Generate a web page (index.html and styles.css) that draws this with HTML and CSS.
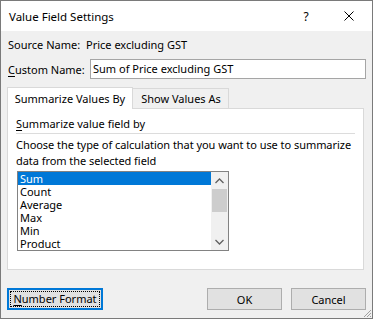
FILE: index.html
```html
<!DOCTYPE html>
<html>
<head>
<meta charset="utf-8">
<link rel="stylesheet" href="styles.css">
</head>
<body>
<div class="window">
  <div class="titlebar">
    <span class="title">Value Field Settings</span>
    <span class="help">?</span>
    <span class="close"><svg width="10" height="10" viewBox="0 0 10 10"><path d="M0.5 0.5 L9.5 9.5 M9.5 0.5 L0.5 9.5" stroke="#000" stroke-width="1" fill="none"/></svg></span>
  </div>
  <div class="body">
    <div class="row source">
      <span class="label">Source Name:</span>
      <span class="value">Price excluding GST</span>
    </div>
    <div class="row custom">
      <span class="label"><u>C</u>ustom Name:</span>
      <div class="input">Sum of Price excluding GST</div>
    </div>
    <div class="tabs">
      <div class="tab active">Summarize Values By</div>
      <div class="tab">Show Values As</div>
    </div>
    <div class="panel">
      <div class="heading"><u>S</u>ummarize value field by</div>
      <p class="desc"><span class="line">Choose the type of calculation that you want to use to summarize</span> data from the selected field</p>
      <div class="listbox">
        <ul class="items">
          <li class="selected">Sum</li>
          <li>Count</li>
          <li>Average</li>
          <li>Max</li>
          <li>Min</li>
          <li>Product</li>
        </ul>
        <div class="scrollbar">
          <div class="arrow"><svg width="9" height="6" viewBox="0 0 9 6"><path d="M0.5 5 L4.5 1 L8.5 5" stroke="#606060" stroke-width="1.3" fill="none"/></svg></div>
          <div class="thumb"></div>
          <div class="track"></div>
          <div class="arrow"><svg width="9" height="6" viewBox="0 0 9 6"><path d="M0.5 1 L4.5 5 L8.5 1" stroke="#606060" stroke-width="1.3" fill="none"/></svg></div>
        </div>
      </div>
    </div>
    <div class="buttons">
      <button class="btn default"><span class="focus"><u>N</u>umber Format</span></button>
      <div class="spacer"></div>
      <button class="btn ok">OK</button>
      <button class="btn cancel">Cancel</button>
    </div>
  </div>
  <svg class="grip" width="10" height="10" viewBox="0 0 10 10">
    <path d="M9 2 L2 9 M9 5 L5 9 M9 8 L8 9" stroke="#a0a0a0" stroke-width="1" fill="none"/>
  </svg>
</div>
</body>
</html>
```
FILE: styles.css
```css
* { box-sizing: border-box; margin: 0; padding: 0; }
body { margin: 0; font-family: "Noto Sans", "Open Sans", sans-serif; font-size: 11px; color: #000; background: #fff; }

.window {
  width: 373px; height: 319px;
  border: 1px solid #7a7a7a;
  background: #f0f0f0;
  position: relative;
  display: flex; flex-direction: column;
}

.titlebar {
  height: 30px; background: #fff;
  display: flex; align-items: center;
  flex-shrink: 0;
}
.title { flex: 1; padding-left: 8px; font-size: 11.5px; }
.help { width: 14px; text-align: center; font-size: 12px; margin-right: 31px; }
.close { width: 10px; height: 10px; margin-right: 18px; display: flex; }

.body { flex: 1; padding: 5px 6px 0 6px; display: flex; flex-direction: column; }

.row { display: flex; align-items: center; }
.row .label { padding-left: 1px; }
.source { height: 16px; }
.source .label { width: 79px; }
.custom { margin-top: 7px; height: 20px; }
.custom .label { width: 83px; }
.custom u, .heading u, .btn u { text-decoration: underline; text-underline-offset: 2px; }
.input {
  flex: 1; height: 20px;
  border: 1px solid #a5a5a5; background: #fff;
  padding-left: 2px; line-height: 18px;
}

.tabs { display: flex; margin-top: 8px; height: 21px; align-items: flex-end; position: relative; z-index: 1; }
.tab {
  height: 20px; line-height: 19px;
  border: 1px solid #d9d9d9; border-bottom: none;
  background: #f0f0f0;
  text-align: center;
}
.tab.active { width: 126px; height: 22px; margin-bottom: -1px; background: #fff; line-height: 22px; }
.tab:not(.active) { width: 96px; border-left: none; padding-left: 1px; }

.panel {
  height: 162px; margin-right: 2px;
  background: #fff; border: 1px solid #d9d9d9;
  padding: 7px 6px 0 8px;
}
.heading {
  line-height: 16px; padding-bottom: 1px;
  border-bottom: 1px solid #dcdcdc;
  margin-right: 2px;
}
.desc { margin-top: 3px; line-height: 16px; letter-spacing: -0.05px; }
.desc .line { white-space: nowrap; }
.listbox {
  margin-top: 2px; margin-left: 1px;
  width: 212px; height: 80px;
  border: 1px solid #828282;
  display: flex;
}
.items { list-style: none; flex: 1; }
.items li { height: 13px; line-height: 13px; padding-left: 2px; }
.items li.selected { background: #0078d7; color: #fff; }
.scrollbar { width: 17px; background: #f0f0f0; display: flex; flex-direction: column; }
.arrow { height: 17px; display: flex; align-items: center; justify-content: center; }
.thumb { height: 23px; margin: 0 1px; background: #cdcdcd; }
.track { flex: 1; }

.buttons { display: flex; margin-top: 18px; height: 22px; }
.spacer { flex: 1; }
.btn {
  font-family: inherit; font-size: 11px; color: #000;
  height: 22px; background: #e1e1e1; border: 1px solid #adadad;
}
.btn.default { width: 96px; border: 2px solid #0078d7; padding: 1px; display: flex; }
.btn .focus { flex: 1; border: 1px dotted #000; line-height: 14px; }
.btn.ok { width: 75px; }
.btn.cancel { width: 75px; margin-left: 9px; }

.grip { position: absolute; right: 0; bottom: 0; }
```
